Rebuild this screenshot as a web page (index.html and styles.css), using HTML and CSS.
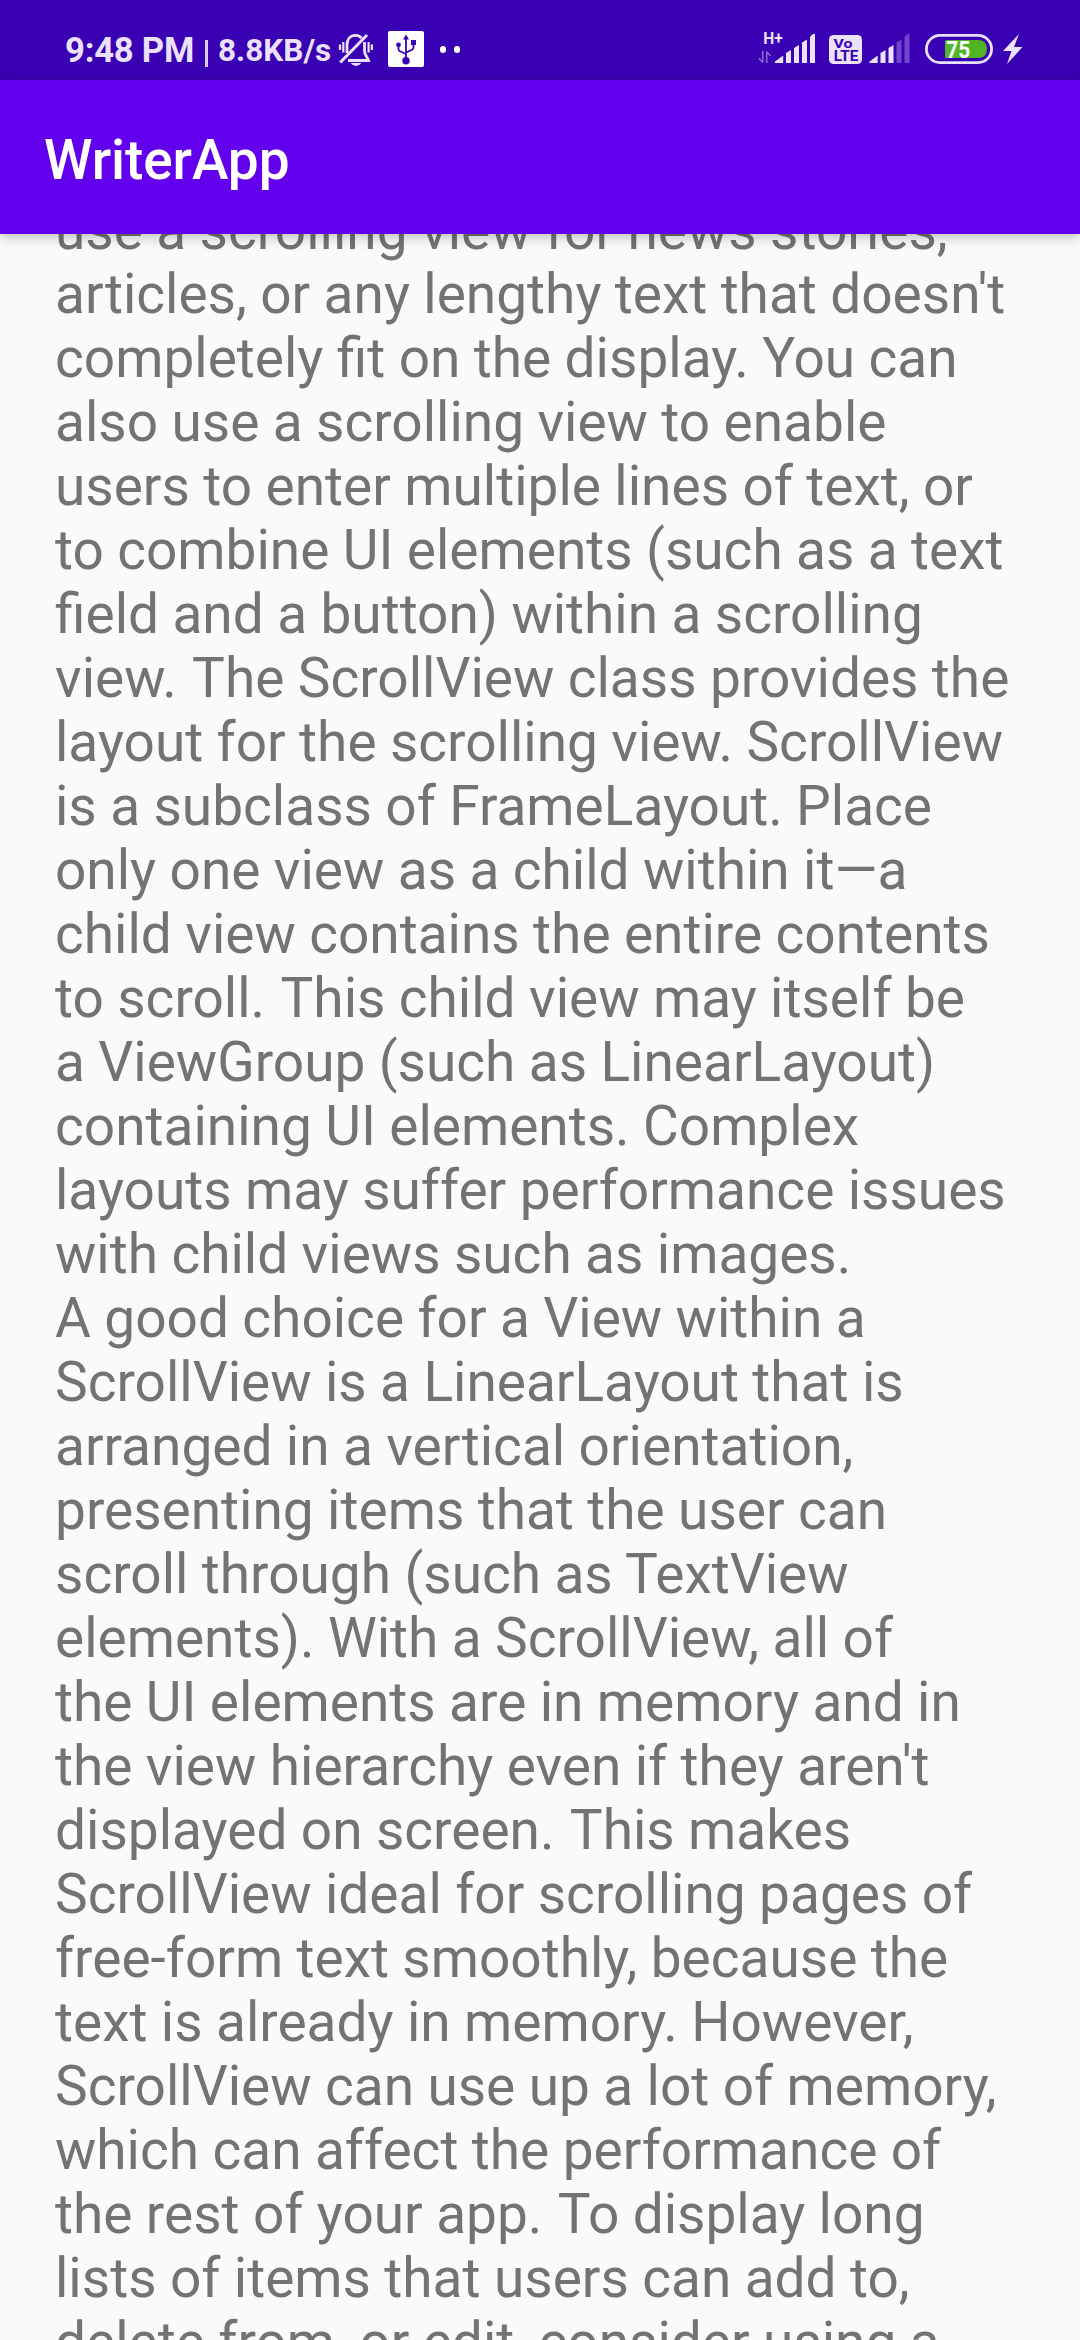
FILE: index.html
```html
<!DOCTYPE html>
<html lang="en">
<head>
<meta charset="utf-8">
<title>WriterApp</title>
<link rel="stylesheet" href="styles.css">
</head>
<body>
<div class="screen">
  <header class="status-bar">
    <div class="status-left">
      <span class="clock">9:48 PM</span>
      <span class="divider"></span>
      <span class="speed">8.8KB/s</span>
      <svg class="bell" width="36" height="36" viewBox="0 0 36 36">
        <g fill="none" stroke="#ebe1fb" stroke-width="2.8">
          <path d="M9 22V14C9 8 12.500 4.400 17.500 4.400C20 4.400 22 5.200 23.500 7"/>
          <path d="M26.500 11V20C26.500 24 29.500 26 30.500 29.500H10"/>
          <path d="M2.200 31.500L29 4" stroke-width="3"/>
          <path d="M5.300 11V21.500M2 13.500V19M30.600 11V21.500M33.900 13.500V19" stroke-width="2.200"/>
        </g>
        <path d="M12.500 32H23.500Q21 35 18 35T12.500 32Z" fill="#ebe1fb"/>
      </svg>
      <svg class="usb" width="36" height="36" viewBox="0 0 36 36">
        <rect width="36" height="36" rx="2" fill="#fff"/>
        <g fill="none" stroke="#3a00b3" stroke-width="1.800">
          <path d="M18 7V29M10.500 14V18.500Q10.500 19.500 12 20.200L18 23M25.500 12V16.500Q25.500 18 24 18.800L18 21.500"/>
        </g>
        <g fill="#3a00b3"><path d="M18 3.500L21 8.500H15Z"/><circle cx="18" cy="29.800" r="3.700"/><circle cx="10.500" cy="13.800" r="2.400"/><rect x="23" y="9" width="5" height="5"/></g>
      </svg>
      <span class="more"><i class="dot"></i><i class="dot"></i></span>
    </div>
    <div class="status-right">
      <svg class="cell" width="58" height="34" viewBox="0 0 58 34">
        <text class="network" x="5.300" y="14" textLength="19.500" lengthAdjust="spacingAndGlyphs">H+</text>
        <path d="M4.700 21V32M5 32.500L.800 28.300M8.700 33V22M8.500 21.500L12.500 26" stroke="#8a62d6" stroke-width="1.700" fill="none"/>
        <g fill="#ebe1fb"><path d="M17 33V31.500L25.200 25.500V33Z"/><path d="M28 33V23L33 20V33Z"/><path d="M36 33V18L41 15V33Z"/><path d="M44 33V12.500L49 9.500V33Z"/><path d="M52 33V7L54 4.800Q57 3 57 4.500V33Z"/></g>
      </svg>
      <svg class="volte" width="34" height="30" viewBox="0 0 34 30">
        <rect y="0" width="33" height="29" rx="4.500" fill="#ebe1fb"/>
        <text class="volte-vo" x="4.500" y="12.600" textLength="19" lengthAdjust="spacingAndGlyphs">Vo</text>
        <text class="volte-lte" x="4.800" y="26" textLength="24.500" lengthAdjust="spacingAndGlyphs">LTE</text>
      </svg>
      <svg class="cell-two" width="41" height="34" viewBox="16.500 0 41 34">
        <g fill="#ebe1fb"><path d="M17 33V31.500L25.200 25.500V33Z"/><path d="M28 33V23L33 20V33Z"/><path d="M36 33V18L41 15V33Z"/></g>
        <g fill="#7443cb"><path d="M44 33V12.500L49 9.500V33Z"/><path d="M52 33V7L54 4.800Q57 3 57 4.500V33Z"/></g>
      </svg>
      <svg class="battery" width="68" height="30" viewBox="0 0 68 30">
        <rect x="1.400" y="1.400" width="65.200" height="27.200" rx="13.600" fill="none" stroke="#ebe1fb" stroke-width="2.800"/>
        <path d="M21.500 6H53Q62 6 62 15T53 24H21.500Q20 24 20 22.500V7.500Q20 6 21.500 6Z" fill="#50b424"/>
        <text class="level" x="21.300" y="23.700" textLength="24" lengthAdjust="spacingAndGlyphs">75</text>
      </svg>
      <svg class="bolt" width="20" height="30" viewBox="0 0 20 30"><path d="M16 0L0 17H8.500L4 30L19.500 13H11Z" fill="#ebe1fb"/></svg>
    </div>
  </header>
  <div class="app-bar"><h1 class="app-title">WriterApp</h1></div>
  <main class="scroll">
    <p class="article">use a scrolling view for news stories,
articles, or any lengthy text that doesn't
completely fit on the display. You can
also use a scrolling view to enable
users to enter multiple lines of text, or
to combine UI elements (such as a text
field and a button) within a scrolling
view. <span class="lead">The</span> ScrollView class provides the
layout for the scrolling view. ScrollView
is a subclass of FrameLayout. Place
only one view as a child within it—a
child view contains the entire contents
to scroll. <span class="lead">This</span> child view may itself be
a ViewGroup (such as LinearLayout)
containing UI elements. Complex
layouts may suffer performance issues
with child views such as images.
A good choice for a View within a
ScrollView is a LinearLayout that is
arranged in a vertical orientation,
presenting items that the user can
scroll through (such as TextView
elements). With a ScrollView, all of
the UI elements are in memory and in
the view hierarchy even if they aren't
displayed on screen. <span class="lead">This</span> makes
ScrollView ideal for scrolling pages of
free-form text smoothly, because the
text is already in memory. However,
ScrollView can use up a lot of memory,
which can affect the performance of
the rest of your app. <span class="lead">To</span> display long
lists of items that users can add to,
delete from, or edit, consider using a</p>
  </main>
</div>
</body>
</html>
```
FILE: styles.css
```css
body { margin: 0; font-family: Roboto, sans-serif; }
.screen { display: flex; flex-direction: column; width: 1080px; height: 2340px; overflow: hidden; background: #fafafa; }
.status-bar { display: flex; flex: none; justify-content: space-between; box-sizing: border-box; height: 80px; padding: 18px 57px 0 65px; background: #3a00b3; color: #ebe1fb; }
.status-left, .status-right { display: flex; align-items: center; height: 62px; }
.clock { font-size: 34.7px; font-weight: 700; letter-spacing: -0.25px; white-space: nowrap; width: 140px; padding-top: 1px; }
.divider { width: 3px; height: 27px; margin: 8px 10px 0 0; background: #d9cbf5; }
.speed { font-size: 31.5px; font-weight: 700; width: 120px; padding-top: 2px; }
.bell { margin-right: 14px; }
.more { display: flex; gap: 8px; margin-left: 16px; }
.dot { width: 6px; height: 7px; border-radius: 3px; background: #fff; }
.cell { margin-right: 13px; margin-top: -5px; overflow: visible; }
.volte { margin-right: 6px; margin-top: 2px; }
.cell-two { margin-right: 15px; margin-top: -5px; }
.battery { margin-right: 10px; }
.network { font: 700 16px Roboto, sans-serif; fill: #ebe1fb; }
.volte-vo { font: 700 13px Roboto, sans-serif; fill: #3a00b3; }
.volte-lte { font: 700 14px Roboto, sans-serif; fill: #3a00b3; }
.level { font: 700 24px Roboto, sans-serif; fill: #fff; }
.app-bar { display: flex; flex: none; align-items: center; box-sizing: border-box; position: relative; height: 154px; padding: 6px 44px 0; background: #6200ee; box-shadow: 0 3px 12px rgba(0, 0, 0, .25); }
.app-title { margin: 0; font-size: 55px; font-weight: 500; line-height: 64px; letter-spacing: -0.1px; color: #fff; }
.scroll { flex: 1; min-height: 0; padding: 0 55px; }
.article { margin: -36px 0 0; font-size: 55px; line-height: 64px; word-spacing: -0.25px; white-space: pre; color: #737373; }
.lead { margin-left: 2px; }
```
